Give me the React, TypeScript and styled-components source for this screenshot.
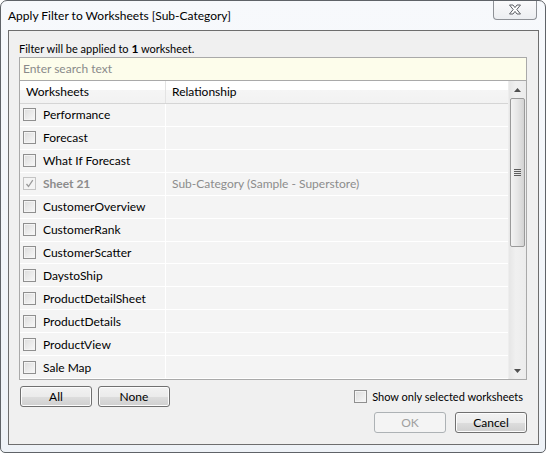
import React from "react";
import styled, { createGlobalStyle } from "styled-components";

const GlobalStyle = createGlobalStyle`
  html, body {
    margin: 0;
    padding: 0;
    background: #ffffff;
  }
  body {
    font-family: Lato, "Open Sans", "DejaVu Sans", sans-serif;
    font-size: 12px;
    color: #000;
  }
`;

const sheets = [
  { name: "Performance" },
  { name: "Forecast" },
  { name: "What If Forecast" },
  { name: "Sheet 21", relation: "Sub-Category (Sample - Superstore)", locked: true },
  { name: "CustomerOverview" },
  { name: "CustomerRank" },
  { name: "CustomerScatter" },
  { name: "DaystoShip" },
  { name: "ProductDetailSheet" },
  { name: "ProductDetails" },
  { name: "ProductView" },
  { name: "Sale Map" },
];

const Window = styled.div`
  box-sizing: border-box;
  width: 546px;
  height: 453px;
  display: flex;
  flex-direction: column;
  border: 1px solid #5f6368;
  border-radius: 7px 7px 5px 5px;
  background: linear-gradient(180deg, #f7f9fc 0%, #eef2f7 100%);
  overflow: hidden;
`;

const TitleBar = styled.div`
  height: 29px;
  display: flex;
  align-items: flex-start;
  padding-left: 7px;
`;

const Title = styled.div`
  margin-top: 7px;
  font-size: 12px;
  color: #000;
  white-space: nowrap;
`;

const CloseButton = styled.div`
  margin-left: auto;
  margin-right: 8px;
  margin-top: -1px;
  width: 44px;
  height: 20px;
  box-sizing: border-box;
  border: 1px solid #8e9196;
  border-top: none;
  border-radius: 0 0 4px 4px;
  background: linear-gradient(180deg, #fbfbfc 0%, #eceef1 100%);
  display: flex;
  align-items: center;
  justify-content: center;
`;

const Client = styled.div`
  flex: 1;
  margin: 0 6px 7px 7px;
  border: 1px solid #6e6e6e;
  background: #f0f0f0;
  padding: 9px 11px 0 10px;
  display: flex;
  flex-direction: column;
`;

const Caption = styled.div`
  height: 17px;
  line-height: 17px;
  font-size: 11px;
  b {
    font-weight: 700;
    font-size: 12px;
  }
`;

const SearchBox = styled.div`
  height: 23px;
  box-sizing: border-box;
  border: 1px solid #a9a9a9;
  border-bottom: none;
  background: #fdfdeb;
  padding-left: 3px;
  line-height: 22px;
  color: #8a8a8a;
`;

const Table = styled.div`
  height: 300px;
  box-sizing: border-box;
  border: 1px solid #a9a9a9;
  display: flex;
  background: #f4f4f4;
`;

const Grid = styled.div`
  flex: 1;
  display: flex;
  flex-direction: column;
`;

const HeaderRow = styled.div`
  height: 23px;
  box-sizing: border-box;
  display: grid;
  grid-template-columns: 146px 1fr;
  background: linear-gradient(180deg, #ffffff 0%, #ffffff 40%, #f5f5f5 41%, #f2f2f2 100%);
  border-bottom: 1px solid #d5d5d5;
`;

const HeaderCell = styled.div<{ $divider?: boolean }>`
  padding-left: 6px;
  line-height: 22px;
  border-right: ${(p) => (p.$divider ? "1px solid #e3e3e3" : "none")};
  color: #000;
`;

const Row = styled.div`
  height: 23px;
  box-sizing: border-box;
  display: grid;
  grid-template-columns: 146px 1fr;
  border-bottom: 1px solid #ffffff;
`;

const NameCell = styled.div<{ $locked?: boolean }>`
  display: flex;
  align-items: center;
  gap: 7px;
  padding-left: 3px;
  border-right: 1px solid #ffffff;
  color: ${(p) => (p.$locked ? "#8c8c8c" : "#000")};
  font-weight: ${(p) => (p.$locked ? 700 : 400)};
  white-space: nowrap;
`;

const RelCell = styled.div`
  padding-left: 6px;
  line-height: 22px;
  color: #8c8c8c;
  white-space: nowrap;
`;

const Box = styled.span<{ $disabled?: boolean }>`
  flex: none;
  width: 13px;
  height: 13px;
  box-sizing: border-box;
  border: 1px solid ${(p) => (p.$disabled ? "#c4c4c4" : "#8f8f8f")};
  background: ${(p) =>
    p.$disabled
      ? "#f4f4f4"
      : "linear-gradient(135deg, #dcdcdc 0%, #ededed 60%, #f8f8f8 100%)"};
  box-shadow: inset 0 0 0 1px #f4f4f4;
  display: inline-flex;
  align-items: center;
  justify-content: center;
`;

const ScrollBar = styled.div`
  width: 17px;
  display: flex;
  flex-direction: column;
  background: linear-gradient(90deg, #e6e6e6 0%, #f0f0f0 40%, #ececec 100%);
  border-left: 1px solid #ededed;
`;

const Arrow = styled.div`
  height: 17px;
  display: flex;
  align-items: center;
  justify-content: center;
`;

const Thumb = styled.div`
  margin: 0 1px;
  height: 149px;
  box-sizing: border-box;
  border: 1px solid #9a9a9a;
  border-radius: 2px;
  background: linear-gradient(90deg, #f3f3f3 0%, #e6e6e6 50%, #d3d3d3 100%);
  display: flex;
  align-items: center;
  justify-content: center;
`;

const Track = styled.div`
  flex: 1;
`;

const ActionRow = styled.div`
  display: flex;
  align-items: center;
  margin-top: 6px;
  padding-left: 1px;
  gap: 6px;
`;

const Button = styled.div<{ $disabled?: boolean }>`
  width: 72px;
  height: 21px;
  box-sizing: border-box;
  border: 1px solid ${(p) => (p.$disabled ? "#adb2b5" : "#707070")};
  border-radius: 3px;
  background: ${(p) =>
    p.$disabled
      ? "#f4f4f4"
      : "linear-gradient(180deg, #f2f2f2 0%, #ebebeb 50%, #dddddd 51%, #cfcfcf 100%)"};
  box-shadow: inset 0 0 0 1px ${(p) => (p.$disabled ? "#f4f4f4" : "#fcfcfc")};
  display: flex;
  align-items: center;
  justify-content: center;
  color: ${(p) => (p.$disabled ? "#a0a0a0" : "#000")};
`;

const Option = styled.label`
  margin-left: auto;
  display: flex;
  align-items: center;
  gap: 5px;
  margin-right: 4px;
  font-size: 11px;
`;

const FooterRow = styled.div`
  display: flex;
  justify-content: flex-end;
  gap: 9px;
  margin-top: 5px;
`;

const CheckMark = ({ color }: { color: string }) => (
  <svg width="9" height="9" viewBox="0 0 9 9">
    <path d="M1.5 5 L3.5 7.5 L7.8 1.2" fill="none" stroke={color} strokeWidth="1.3" />
  </svg>
);

const CloseGlyph = () => (
  <svg width="14" height="11" viewBox="0 0 14 11">
    <path
      d="M1.5 1 L5 1 L7 3.6 L9 1 L12.5 1 L8.8 5.5 L12.5 10 L9 10 L7 7.4 L5 10 L1.5 10 L5.2 5.5 Z"
      fill="#ffffff"
      stroke="#5c5f64"
      strokeWidth="1"
      strokeLinejoin="round"
    />
  </svg>
);

const ArrowGlyph = ({ up }: { up?: boolean }) => (
  <svg width="7" height="4" viewBox="0 0 7 4">
    <path d={up ? "M0 4 L3.5 0 L7 4 Z" : "M0 0 L7 0 L3.5 4 Z"} fill="#505050" />
  </svg>
);

const Grip = () => (
  <svg width="7" height="7" viewBox="0 0 7 7">
    <path d="M0 0.5 H7 M0 2.5 H7 M0 4.5 H7 M0 6.5 H7" stroke="#5e5e5e" strokeWidth="1" />
  </svg>
);

const App: React.FC = () => {
  return (
    <>
      <GlobalStyle />
      <Window>
        <TitleBar>
          <Title>Apply Filter to Worksheets [Sub-Category]</Title>
          <CloseButton>
            <CloseGlyph />
          </CloseButton>
        </TitleBar>
        <Client>
          <Caption>
            Filter will be applied to <b>1</b> worksheet.
          </Caption>
          <SearchBox>Enter search text</SearchBox>
          <Table>
            <Grid>
              <HeaderRow>
                <HeaderCell $divider>Worksheets</HeaderCell>
                <HeaderCell>Relationship</HeaderCell>
              </HeaderRow>
              {sheets.map((s) => (
                <Row key={s.name}>
                  <NameCell $locked={s.locked}>
                    <Box $disabled={s.locked}>
                      {s.locked && <CheckMark color="#9a9a9a" />}
                    </Box>
                    {s.name}
                  </NameCell>
                  <RelCell>{s.relation}</RelCell>
                </Row>
              ))}
            </Grid>
            <ScrollBar>
              <Arrow>
                <ArrowGlyph up />
              </Arrow>
              <Thumb>
                <Grip />
              </Thumb>
              <Track />
              <Arrow>
                <ArrowGlyph />
              </Arrow>
            </ScrollBar>
          </Table>
          <ActionRow>
            <Button>All</Button>
            <Button>None</Button>
            <Option>
              <Box />
              Show only selected worksheets
            </Option>
          </ActionRow>
          <FooterRow>
            <Button $disabled>OK</Button>
            <Button>Cancel</Button>
          </FooterRow>
        </Client>
      </Window>
    </>
  );
};

export default App;
